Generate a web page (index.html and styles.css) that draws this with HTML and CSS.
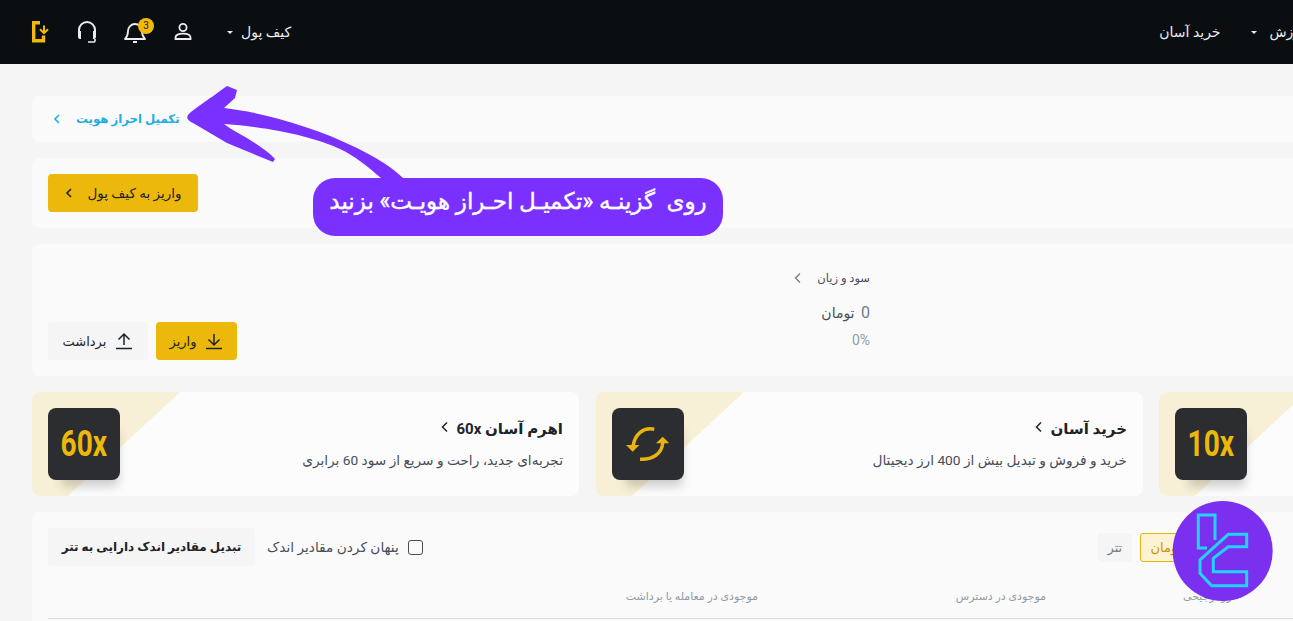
FILE: index.html
```html
<!DOCTYPE html>
<html lang="fa">
<head>
    <meta charset="UTF-8">
    <meta name="viewport" content="width=device-width, initial-scale=1.0">
    <title>داشبورد</title>
    <link rel="stylesheet" href="styles.css">
</head>
<body>

<header class="topbar">
    <div class="topbar-tools">
        <svg class="tool-icon" width="26" height="26" viewBox="0 0 26 26" fill="none">
            <path d="M14 3.700H7.700V21.700H17.500V16.500" stroke="#f0b90b" stroke-width="3.400"/>
            <path d="M18 6.500V14M14 10.200L18 14.200L22 10.200" stroke="#f0b90b" stroke-width="2"/>
        </svg>
        <svg class="tool-icon" width="26" height="26" viewBox="0 0 26 26" fill="none">
            <path d="M5 15V11a8 8 0 0 1 16 0v4" stroke="#eaecef" stroke-width="2"/>
            <path d="M4 12h3v8H6a2 2 0 0 1-2-2zM22 12h-3v8h1a2 2 0 0 0 2-2z" fill="#eaecef"/>
            <path d="M21 20v2a1 1 0 0 1-1 1h-6" stroke="#eaecef" stroke-width="1.600"/>
        </svg>
        <div class="bell">
            <svg width="26" height="26" viewBox="0 0 26 26" fill="none">
                <path d="M3 20c2-2 3-4 3-8a7 7 0 0 1 14 0c0 4 1 6 3 8z" stroke="#eaecef" stroke-width="1.800" stroke-linejoin="round"/>
                <path d="M11 23h4" stroke="#eaecef" stroke-width="2"/>
            </svg>
            <span class="bell-badge">3</span>
        </div>
        <svg class="tool-icon" width="26" height="26" viewBox="0 0 26 26" fill="none">
            <circle cx="13" cy="8.500" r="3.600" stroke="#eaecef" stroke-width="1.800"/>
            <path d="M5.500 20v-1.500c0-2.500 3-3.800 7.500-3.800s7.500 1.300 7.500 3.800V20z" stroke="#eaecef" stroke-width="1.800"/>
        </svg>
        <a class="nav-link wallet-link" href="#"><span class="caret"></span><span dir="rtl">کیف پول</span></a>
    </div>
    <nav class="topbar-nav">
        <a class="nav-link" href="#" dir="rtl">خرید آسان</a>
        <a class="nav-link learn-link" href="#"><span class="caret"></span><span dir="rtl">آموزش</span></a>
    </nav>
</header>

<main class="content">
    <section class="panel kyc-panel">
        <a class="kyc-link" href="#">
            <svg width="10" height="12" viewBox="0 0 10 12" fill="none"><path d="M7 2L3 6l4 4" stroke="#1eaee0" stroke-width="1.600"/></svg>
            <span dir="rtl">تکمیل احراز هویت</span>
        </a>
    </section>

    <section class="panel wallet-panel">
        <a class="btn btn-yellow wallet-btn" href="#">
            <svg width="10" height="12" viewBox="0 0 10 12" fill="none"><path d="M7 2L3 6l4 4" stroke="#1e2329" stroke-width="1.600"/></svg>
            <span dir="rtl">واریز به کیف پول</span>
        </a>
    </section>

    <section class="panel pnl-panel">
        <div class="pnl-actions">
            <a class="btn btn-gray" href="#">
                <span dir="rtl">برداشت</span>
                <svg width="18" height="18" viewBox="0 0 18 18" fill="none"><path d="M9 13V2M3.500 7.500L9 2l5.500 5.500M1 16.500h16" stroke="#1e2329" stroke-width="1.500"/></svg>
            </a>
            <a class="btn btn-yellow" href="#">
                <span dir="rtl">واریز</span>
                <svg width="18" height="18" viewBox="0 0 18 18" fill="none"><path d="M9 2v11M3.500 7.500L9 13l5.500-5.500M1 16.500h16" stroke="#1e2329" stroke-width="1.500"/></svg>
            </a>
        </div>
        <div class="pnl-stats">
            <div class="pnl-title">
                <svg width="10" height="14" viewBox="0 0 10 14" fill="none"><path d="M7 2.500L2.500 7 7 11.500" stroke="#707a8a" stroke-width="1.300"/></svg>
                <span dir="rtl">سود و زیان</span>
            </div>
            <div class="pnl-value" dir="rtl"><b>0</b> تومان</div>
            <div class="pnl-percent">0%</div>
        </div>
    </section>

    <section class="promo-row">
        <article class="promo-card">
            <div class="promo-tile"><span class="tile-text">60x</span></div>
            <div class="promo-text" dir="rtl">
                <h3>اهرم آسان 60x <svg width="9" height="14" viewBox="0 0 9 14" fill="none"><path d="M7 2.500L2.500 7 7 11.500" stroke="#1e2329" stroke-width="1.500"/></svg></h3>
                <p>تجربه‌ای جدید، راحت و سریع از سود 60 برابری</p>
            </div>
        </article>
        <article class="promo-card">
            <div class="promo-tile">
                <svg width="72" height="72" viewBox="0 0 72 72" fill="none">
                    <path d="M42.300 21.300C31 19 23 26 21 38" stroke="#e9b30f" stroke-width="3.500"/>
                    <path d="M14 37H27.300L20.700 43.700Z" fill="#e9b30f"/>
                    <path d="M50.700 35C50 46 40 52 28 51.300" stroke="#e9b30f" stroke-width="3.500"/>
                    <path d="M44 35.300H57.300L50.700 28.700Z" fill="#e9b30f"/>
                </svg>
            </div>
            <div class="promo-text" dir="rtl">
                <h3>خرید آسان <svg width="9" height="14" viewBox="0 0 9 14" fill="none"><path d="M7 2.500L2.500 7 7 11.500" stroke="#1e2329" stroke-width="1.500"/></svg></h3>
                <p>خرید و فروش و تبدیل بیش از 400 ارز دیجیتال</p>
            </div>
        </article>
        <article class="promo-card">
            <div class="promo-tile"><span class="tile-text">10x</span></div>
        </article>
    </section>

    <section class="panel assets-panel">
        <div class="assets-toolbar">
            <a class="btn btn-gray convert-btn" href="#" dir="rtl">تبدیل مقادیر اندک دارایی به تتر</a>
            <label class="hide-small">
                <span dir="rtl">پنهان کردن مقادیر اندک</span>
                <span class="checkbox"></span>
            </label>
            <div class="unit-tabs">
                <span class="unit-tab">تتر</span>
                <span class="unit-tab unit-active">تومان</span>
            </div>
        </div>
        <div class="assets-head">
            <span class="col-trade" dir="rtl">موجودی در معامله یا برداشت</span>
            <span class="col-free" dir="rtl">موجودی در دسترس</span>
            <span class="col-coin" dir="rtl">ارز ترجیحی</span>
        </div>
    </section>
</main>

<!-- فلش و راهنما روی صفحه -->
<svg class="guide-arrow" width="240" height="110" viewBox="180 80 240 110">
    <path d="M227 86L237 90L235 98L224 108C260 112 313 126 357 148C375 157 392 167 403 178H381C368 167 355 156 340 149C315 137 270 127 224 124C232 130 240 134 247 138C258 145 268 151 275 159L273 162L227 143L193 123C188 121 186 118 188 115C191 111 208 100 227 86Z" fill="#7a30ff"/>
</svg>
<div class="guide-bubble" dir="rtl">روی  گزینـه «تکمیـل احـراز هویـت» بزنید</div>

<svg class="site-badge" width="115" height="115" viewBox="0 0 115 115" fill="none">
    <circle cx="57.700" cy="56" r="50" fill="#7a30ee"/>
    <path d="M50 45V20H33.300V53H42" stroke="#22d3ff" stroke-width="3"/>
    <path d="M81.700 39.300H63.300L35 65V78.300L46.700 90.700H81.700V76.700H48.300V63.300L63.300 51.700H81.700Z" stroke="#22d3ff" stroke-width="3"/>
</svg>

</body>
</html>
```

FILE: styles.css
```css
html, body {
    margin: 0;
    height: 621px;
    overflow: hidden;
}
body {
    position: relative;
    background-color: #f5f5f5;
    color: #1e2329;
    font-family: 'Roboto', 'DejaVu Sans', sans-serif;
    font-size: 13px;
}
a {
    color: inherit;
    text-decoration: none;
}
.topbar {
    height: 64px;
    background-color: #0b0e11;
    display: flex;
    justify-content: space-between;
    align-items: center;
    padding: 0 28px 0 26px;
    width: 1340px;
    box-sizing: border-box;
}
.topbar-tools {
    display: flex;
    align-items: center;
    gap: 22px;
}
.tool-icon {
    display: block;
}
.nav-link {
    color: #eaecef;
    font-size: 14px;
    display: flex;
    align-items: center;
    gap: 8px;
}
.learn-link {
    gap: 13px;
}
.wallet-link {
    margin-left: 9px;
}
.topbar-nav {
    display: flex;
    align-items: center;
    gap: 30px;
}
.caret {
    width: 0;
    height: 0;
    border-left: 3px solid transparent;
    border-right: 3px solid transparent;
    border-top: 3px solid #eaecef;
}
.bell {
    position: relative;
    width: 26px;
    height: 26px;
}
.bell-badge {
    position: absolute;
    top: -1px;
    left: 16px;
    width: 16px;
    height: 16px;
    border-radius: 50%;
    background-color: #f0b90b;
    color: #1e2329;
    font-size: 10px;
    line-height: 16px;
    text-align: center;
}
.content {
    width: 1400px;
    margin-left: 32px;
    padding-top: 32px;
    display: flex;
    flex-direction: column;
    gap: 16px;
}
.panel {
    background-color: #fafafa;
    border-radius: 8px;
    padding: 16px;
    box-sizing: border-box;
}
.kyc-panel {
    height: 46px;
    padding: 0 16px 0 20px;
    display: flex;
    align-items: center;
}
.kyc-link {
    display: flex;
    align-items: center;
    gap: 14px;
    color: #1eaee0;
    font-weight: 700;
    font-size: 11.800px;
}
.wallet-panel {
    height: 70px;
}
.btn {
    display: inline-flex;
    align-items: center;
    justify-content: center;
    height: 38px;
    gap: 9px;
    border-radius: 4px;
    font-size: 13px;
    box-sizing: border-box;
}
.btn-yellow {
    background-color: #ecb80c;
}
.btn-gray {
    background-color: #f5f5f5;
}
.wallet-btn {
    width: 150px;
    gap: 13px;
    font-size: 13.500px;
}
.pnl-panel {
    height: 132px;
    display: grid;
    grid-template-columns: 622px 200px;
}
.pnl-actions {
    align-self: end;
    display: flex;
    gap: 8px;
}
.pnl-actions .btn-gray {
    width: 100px;
}
.pnl-actions .btn-yellow {
    width: 81px;
}
.pnl-stats {
    text-align: right;
    color: #707a8a;
}
.pnl-title {
    display: flex;
    justify-content: flex-end;
    align-items: center;
    gap: 14px;
    font-size: 11.500px;
    color: #474d57;
    margin-top: 11px;
}
.pnl-value {
    margin-top: 18px;
    font-size: 14px;
    color: #474d57;
    text-align: right;
}
.pnl-value b {
    font-weight: 400;
    font-size: 16px;
    color: #707a8a;
    margin-left: 3px;
}
.pnl-percent {
    margin-top: 10px;
    font-size: 14px;
    color: #929aa5;
}
.promo-row {
    display: flex;
    gap: 17px;
}
.promo-card {
    position: relative;
    flex: 0 0 547px;
    height: 104px;
    box-sizing: border-box;
    padding: 16px;
    display: flex;
    justify-content: space-between;
    background-color: #fcfcfc;
    border-radius: 8px;
    overflow: hidden;
}
.promo-card:last-child {
    margin-left: -1px;
}
.promo-card::before {
    content: "";
    position: absolute;
    left: 0;
    top: 0;
    width: 148px;
    height: 104px;
    background-color: #f8f0d6;
    clip-path: polygon(0 0, 100% 0, 36px 100%, 0 100%);
}
.promo-tile {
    position: relative;
    width: 72px;
    height: 72px;
    background-color: #2c2d30;
    border-radius: 8px;
    color: #ecb80c;
    font-size: 36px;
    font-weight: 700;
    display: flex;
    align-items: center;
    justify-content: center;
    box-shadow: 6px 14px 10px -8px rgba(0, 0, 0, 0.2);
}
.tile-text {
    display: inline-block;
    transform: scaleX(0.78);
}
.promo-text {
    position: relative;
}
.promo-text h3 {
    margin: 12px 0 0;
    font-size: 15px;
    font-weight: 700;
}
.promo-text h3 svg {
    margin-right: 4px;
}
.promo-text p {
    margin: 14px 0 0;
    font-size: 13.700px;
    color: #474d57;
}
.assets-panel {
    height: 160px;
    position: relative;
}
.assets-toolbar {
    position: relative;
    display: flex;
    align-items: center;
    height: 38px;
}
.convert-btn {
    width: 207px;
    font-weight: 700;
    font-size: 12px;
}
.hide-small {
    display: flex;
    align-items: center;
    gap: 9px;
    margin-left: 12px;
    font-size: 13.700px;
    color: #474d57;
}
.checkbox {
    width: 13px;
    height: 13px;
    border: 1.500px solid #474d57;
    border-radius: 3px;
}
.unit-tabs {
    display: flex;
    gap: 8px;
    margin-left: 675px;
}
.unit-tab {
    width: 34px;
    height: 29px;
    line-height: 29px;
    border-radius: 3px;
    background-color: #f5f5f5;
    color: #707a8a;
    font-size: 13px;
    text-align: center;
    box-sizing: border-box;
}
.unit-active {
    width: 52px;
    line-height: 27px;
    background-color: #fdf3d3;
    border: 1px solid #e9b30f;
    color: #c99400;
}
.assets-head {
    position: relative;
    height: 53px;
    padding-top: 24px;
    box-sizing: border-box;
    border-bottom: 1px solid #dcdcdc;
    font-size: 11px;
    color: #929aa5;
    display: grid;
    grid-template-columns: 710px 288px 189px;
    text-align: right;
}
.guide-arrow {
    position: absolute;
    left: 180px;
    top: 80px;
}
.guide-bubble {
    position: absolute;
    left: 313px;
    top: 178px;
    width: 410px;
    height: 58px;
    box-sizing: border-box;
    background-color: #7a30ff;
    border-radius: 22px;
    color: #ffffff;
    font-size: 23px;
    line-height: 48px;
    text-align: center;
    white-space: pre;
    -webkit-text-stroke: 0.4px #ffffff;
}
.site-badge {
    position: absolute;
    left: 1165px;
    top: 495px;
}
```
